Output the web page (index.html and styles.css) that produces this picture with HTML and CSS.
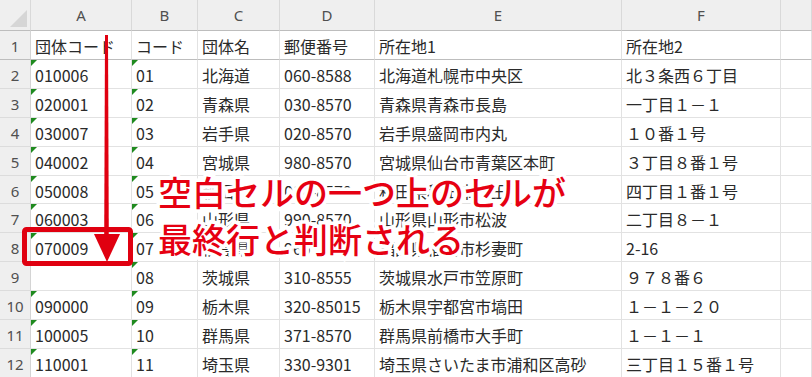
FILE: index.html
```html
<!DOCTYPE html>
<html lang="ja">
<head>
<meta charset="utf-8">
<title>Excel 最終行</title>
<link rel="stylesheet" href="styles.css">
</head>
<body>
<div class="page">
  <div class="sheet">
    <div class="hd corner"><span class="tri"></span></div>
    <div class="hd col">A</div>
    <div class="hd col">B</div>
    <div class="hd col">C</div>
    <div class="hd col">D</div>
    <div class="hd col">E</div>
    <div class="hd col">F</div>
    <div class="hd col"></div>

    <div class="rh frz">1</div>
    <div class="c frz">団体コード</div>
    <div class="c frz">コード</div>
    <div class="c frz">団体名</div>
    <div class="c frz">郵便番号</div>
    <div class="c frz">所在地1</div>
    <div class="c frz">所在地2</div>
    <div class="c frz"></div>

    <div class="rh">2</div>
    <div class="c num">010006</div>
    <div class="c num">01</div>
    <div class="c">北海道</div>
    <div class="c">060-8588</div>
    <div class="c">北海道札幌市中央区</div>
    <div class="c">北３条西６丁目</div>
    <div class="c"></div>

    <div class="rh">3</div>
    <div class="c num">020001</div>
    <div class="c num">02</div>
    <div class="c">青森県</div>
    <div class="c">030-8570</div>
    <div class="c">青森県青森市長島</div>
    <div class="c">一丁目１－１</div>
    <div class="c"></div>

    <div class="rh">4</div>
    <div class="c num">030007</div>
    <div class="c num">03</div>
    <div class="c">岩手県</div>
    <div class="c">020-8570</div>
    <div class="c">岩手県盛岡市内丸</div>
    <div class="c">１０番１号</div>
    <div class="c"></div>

    <div class="rh">5</div>
    <div class="c num">040002</div>
    <div class="c num">04</div>
    <div class="c">宮城県</div>
    <div class="c">980-8570</div>
    <div class="c">宮城県仙台市青葉区本町</div>
    <div class="c">３丁目８番１号</div>
    <div class="c"></div>

    <div class="rh">6</div>
    <div class="c num">050008</div>
    <div class="c num">05</div>
    <div class="c">秋田県</div>
    <div class="c">010-8570</div>
    <div class="c">秋田県秋田市山王</div>
    <div class="c">四丁目１番１号</div>
    <div class="c"></div>

    <div class="rh">7</div>
    <div class="c num">060003</div>
    <div class="c num">06</div>
    <div class="c">山形県</div>
    <div class="c">990-8570</div>
    <div class="c">山形県山形市松波</div>
    <div class="c">二丁目８－１</div>
    <div class="c"></div>

    <div class="rh">8</div>
    <div class="c num">070009</div>
    <div class="c num">07</div>
    <div class="c">福島県</div>
    <div class="c">960-8670</div>
    <div class="c">福島県福島市杉妻町</div>
    <div class="c">2-16</div>
    <div class="c"></div>

    <div class="rh">9</div>
    <div class="c"></div>
    <div class="c num">08</div>
    <div class="c">茨城県</div>
    <div class="c">310-8555</div>
    <div class="c">茨城県水戸市笠原町</div>
    <div class="c">９７８番６</div>
    <div class="c"></div>

    <div class="rh">10</div>
    <div class="c num">090000</div>
    <div class="c num">09</div>
    <div class="c">栃木県</div>
    <div class="c">320-85015</div>
    <div class="c">栃木県宇都宮市塙田</div>
    <div class="c">１－１－２０</div>
    <div class="c"></div>

    <div class="rh">11</div>
    <div class="c num">100005</div>
    <div class="c num">10</div>
    <div class="c">群馬県</div>
    <div class="c">371-8570</div>
    <div class="c">群馬県前橋市大手町</div>
    <div class="c">１－１－１</div>
    <div class="c"></div>

    <div class="rh">12</div>
    <div class="c num">110001</div>
    <div class="c num">11</div>
    <div class="c">埼玉県</div>
    <div class="c">330-9301</div>
    <div class="c">埼玉県さいたま市浦和区高砂</div>
    <div class="c">三丁目１５番１号</div>
    <div class="c"></div>
  </div>

  <svg class="marks" width="812" height="377" viewBox="0 0 812 377">
    <rect x="24.5" y="229.5" width="106" height="34" rx="2" fill="none" stroke="#e00010" stroke-width="5"/>
    <polygon points="105,35 108,35 108.8,238 104.2,238" fill="#e00010"/>
    <polygon points="94,234 120,234 107,262" fill="#e00010"/>
  </svg>

  <div class="note">
    <div class="note-line">空白セルの一つ上のセルが</div>
    <div class="note-line">最終行と判断される</div>
  </div>
</div>
</body>
</html>
```

FILE: styles.css
```css
html, body {
  margin: 0;
  padding: 0;
  background: #ffffff;
}

.page {
  position: relative;
  width: 812px;
  height: 377px;
  overflow: hidden;
  font-family: "Noto Sans CJK JP", "Noto Sans", sans-serif;
}

.sheet {
  display: grid;
  grid-template-columns: 31px 101px 66px 82px 95px 247px 159px 31px;
  grid-template-rows: 31px 29px repeat(11, 28.9px);
}

.sheet > div {
  box-sizing: border-box;
  display: flex;
  align-items: center;
  white-space: nowrap;
  overflow: visible;
}

.hd {
  background: #efefef;
  border-right: 1px solid #d9d9d9;
  border-bottom: 1px solid #bdbdbd;
  color: #505050;
  font-family: "Noto Sans", "Noto Sans CJK JP", sans-serif;
  font-size: 15px;
  justify-content: center;
}

.corner {
  position: relative;
}

.tri {
  position: absolute;
  left: 10px;
  top: 10px;
  width: 0;
  height: 0;
  border-bottom: 17px solid #d6d6d6;
  border-left: 17px solid transparent;
}

.rh {
  background: #efefef;
  border-right: 1px solid #d4d4d4;
  border-bottom: 1px solid #dcdcdc;
  color: #505050;
  font-family: "Noto Sans", "Noto Sans CJK JP", sans-serif;
  font-size: 15px;
  justify-content: center;
  padding-top: 2px;
}

.c {
  position: relative;
  border-right: 1px solid #e2e2e2;
  border-bottom: 1px solid #e2e2e2;
  color: #2a2a2a;
  font-size: 16px;
  padding: 2px 0 0 4px;
}

.frz {
  border-bottom: 1px solid #bdbdbd;
}

.num::before {
  content: "";
  position: absolute;
  left: 0;
  top: 0;
  width: 0;
  height: 0;
  border-top: 6px solid #1f8a1f;
  border-right: 6px solid transparent;
}

.marks {
  position: absolute;
  left: 0;
  top: 0;
  pointer-events: none;
}

.note {
  position: absolute;
  left: 158px;
  top: 168px;
  font-family: "Noto Sans CJK JP", sans-serif;
  font-weight: 500;
  font-size: 34px;
  line-height: 47px;
  color: #e60012;
  white-space: nowrap;
}

.note-line {
  -webkit-text-stroke: 7px #ffffff;
  paint-order: stroke fill;
}
```
